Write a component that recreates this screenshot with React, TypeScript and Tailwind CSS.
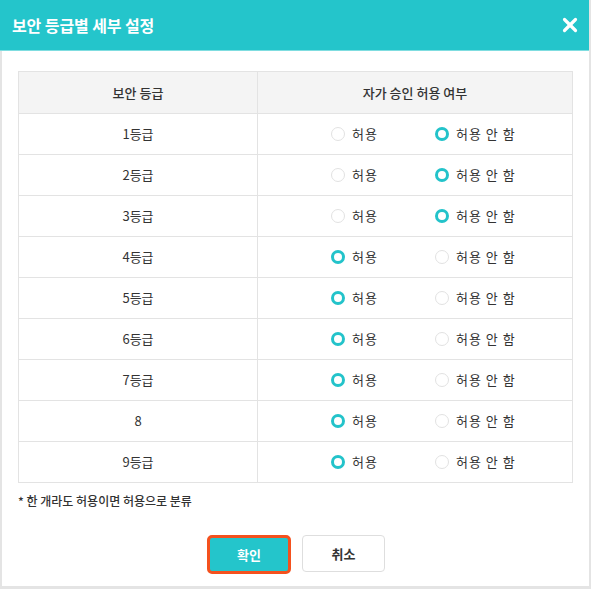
import React, { useState } from 'react';
import { X } from 'lucide-react';

const grades = ['1등급', '2등급', '3등급', '4등급', '5등급', '6등급', '7등급', '8', '9등급'];

const Radio: React.FC<{ checked: boolean; label: string; onClick: () => void }> = ({ checked, label, onClick }) => (
  <button onClick={onClick} className="flex items-center gap-[7px] text-[13px] text-[#333]">
    <span
      className={`w-[14px] h-[14px] rounded-full box-border ${
        checked ? 'border-[3.5px] border-[#23c3ca] bg-white' : 'border border-[#e2e2e2] bg-white'
      }`}
    />
    <span className="tracking-[1px]">{label}</span>
  </button>
);

export default function App() {
  const [values, setValues] = useState<boolean[]>([false, false, false, true, true, true, true, true, true]);

  const setAt = (i: number, v: boolean) => {
    const next = [...values];
    next[i] = v;
    setValues(next);
  };

  return (
    <div
      className="w-[591px] h-[589px] bg-white border-r-2 border-b-[3px] border-[#e4e4e4] flex flex-col"
      style={{ fontFamily: '"Noto Sans CJK KR", "Noto Sans", sans-serif' }}
    >
      {/* Header */}
      <div className="h-[51px] shrink-0 bg-[#24c5cb] border-b border-[#7fdde0] flex items-center justify-between pl-3 pr-[8px]">
        <h1 className="text-white text-[16px] font-bold tracking-[-0.1px]">보안 등급별 세부 설정</h1>
        <X size={22} strokeWidth={3.5} className="text-white" />
      </div>

      {/* Body */}
      <div className="flex-1 border-l-2 border-[#e4e4e4] pl-4 pr-4 pt-5">
        <table className="w-[555px] border-collapse text-[13px] text-[#333]">
          <thead>
            <tr className="bg-[#f4f4f4]">
              <th className="w-[239px] h-[42px] border border-[#e3e3e3] font-medium">보안 등급</th>
              <th className="h-[42px] border border-[#e3e3e3] font-medium">자가 승인 허용 여부</th>
            </tr>
          </thead>
          <tbody>
            {grades.map((g, i) => (
              <tr key={i}>
                <td className="h-[41px] border border-[#e3e3e3] text-center">{g}</td>
                <td className="h-[41px] border border-[#e3e3e3]">
                  <div className="flex items-center pl-[73px]">
                    <div className="w-[104px]">
                      <Radio checked={values[i]} label="허용" onClick={() => setAt(i, true)} />
                    </div>
                    <Radio checked={!values[i]} label="허용 안 함" onClick={() => setAt(i, false)} />
                  </div>
                </td>
              </tr>
            ))}
          </tbody>
        </table>

        <p className="mt-[9px] text-[12px] text-[#333] font-medium">* 한 개라도 허용이면 허용으로 분류</p>

        <div className="mt-[25px] flex justify-center gap-[11px] pl-[1px]">
          <button className="w-[84px] h-[39px] rounded-[5px] bg-[#24c5cb] border-[3px] border-[#f4511e] text-white text-[13px] font-bold">
            확인
          </button>
          <button className="w-[83px] h-[37px] rounded-[4px] bg-white border border-[#dedede] text-[#333] text-[13px] font-bold">
            취소
          </button>
        </div>
      </div>
    </div>
  );
}
